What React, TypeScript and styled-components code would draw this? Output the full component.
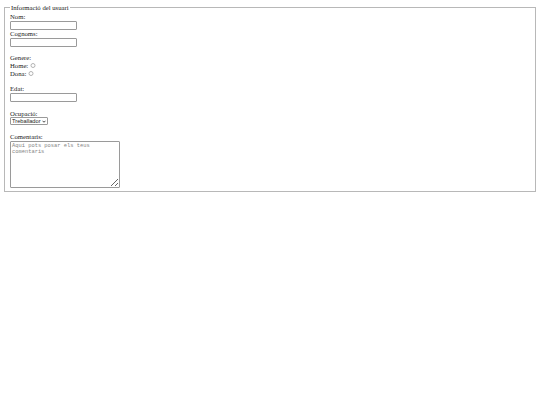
import React from "react";
import styled, { createGlobalStyle } from "styled-components";

const GlobalStyle = createGlobalStyle`
  body {
    margin: 4px;
    background: #ffffff;
    font-family: "Liberation Serif", "Times New Roman", serif;
    font-size: 6.7px;
    line-height: 7.7px;
    color: #1a1a1a;
  }
`;

const Fieldset = styled.fieldset`
  margin: 0;
  padding: 1.7px 5px 3.5px;
  border: 1px solid #b8b8b8;
  min-width: 0;
`;

const Legend = styled.legend`
  padding: 0 1px;
`;

const Label = styled.div`
  height: 7.7px;
`;

const Spacer = styled.div`
  height: 7.7px;
`;

const TextInput = styled.input`
  display: block;
  box-sizing: border-box;
  width: 67px;
  height: 9px;
  margin: 0;
  padding: 0 1px;
  border: 1px solid #9a9a9a;
  border-radius: 1px;
  font-family: "Liberation Sans", Arial, sans-serif;
  font-size: 5.6px;
  outline: none;
`;

const RadioRow = styled.div`
  height: 7.7px;
`;

const Radio = styled.input`
  box-sizing: border-box;
  width: 5.5px;
  height: 5.5px;
  margin: 0 0 0 2px;
  vertical-align: -0.3px;
  opacity: 0.55;
`;

const SelectBox = styled.div`
  display: inline-flex;
  align-items: center;
  box-sizing: border-box;
  height: 8px;
  padding: 0 1px 0 0;
  border: 1px solid #9a9a9a;
  border-radius: 1px;
  background: #ffffff;
  vertical-align: top;
`;

const Select = styled.select`
  appearance: none;
  height: 6px;
  margin: 0;
  padding: 0 0 0 1px;
  border: none;
  background: transparent;
  font-family: "Liberation Sans", Arial, sans-serif;
  font-size: 5.7px;
  line-height: 6px;
  color: #1a1a1a;
  outline: none;
`;

const Chevron = styled.svg`
  width: 4px;
  height: 3px;
  margin-left: 1px;
`;

const TextArea = styled.textarea`
  display: block;
  box-sizing: border-box;
  width: 110px;
  height: 47px;
  margin: 0;
  padding: 1px;
  border: 1px solid #9a9a9a;
  border-radius: 1px;
  font-family: "Liberation Mono", "Courier New", monospace;
  font-size: 5.4px;
  line-height: 6.2px;
  outline: none;

  &::placeholder {
    color: #858585;
  }
`;

export default function App() {
  return (
    <>
      <GlobalStyle />
      <form>
        <Fieldset>
          <Legend>Informació del usuari</Legend>
          <Label>Nom:</Label>
          <TextInput type="text" name="nom" />
          <Label>Cognoms:</Label>
          <TextInput type="text" name="cognoms" />
          <Spacer />
          <Label>Genere:</Label>
          <RadioRow>
            Home:
            <Radio type="radio" name="genere" value="home" />
          </RadioRow>
          <RadioRow>
            Dona:
            <Radio type="radio" name="genere" value="dona" />
          </RadioRow>
          <Spacer />
          <Label>Edat:</Label>
          <TextInput type="text" name="edat" />
          <Spacer />
          <Label>Ocupació:</Label>
          <SelectBox>
            <Select name="ocupacio" defaultValue="treballador">
              <option value="treballador">Treballador</option>
              <option value="estudiant">Estudiant</option>
              <option value="aturat">Aturat</option>
            </Select>
            <Chevron viewBox="0 0 8 6">
              <path d="M1 1.5 L4 4.5 L7 1.5" fill="none" stroke="#1a1a1a" strokeWidth="1.6" />
            </Chevron>
          </SelectBox>
          <Spacer />
          <Label>Comentaris:</Label>
          <TextArea
            name="comentaris"
            placeholder="Aquí pots posar els teus comentaris"
          />
        </Fieldset>
      </form>
    </>
  );
}
